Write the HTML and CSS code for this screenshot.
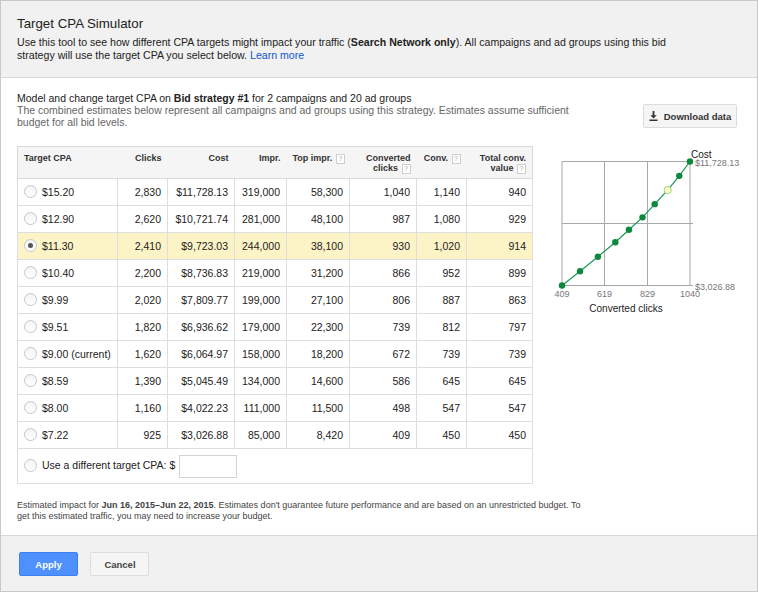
FILE: index.html
```html
<!DOCTYPE html>
<html lang="en">
<head>
  <meta charset="UTF-8">
  <title>Target CPA Simulator</title>
  <link rel="stylesheet" href="styles.css">
</head>
<body>

<div class="dialog">
  <div class="dialog-header">
    <h2>Target CPA Simulator</h2>
    <p>Use this tool to see how different CPA targets might impact your traffic (<b>Search Network only</b>). All campaigns and ad groups using this bid strategy will use the target CPA you select below. <a href="#">Learn more</a></p>
  </div>

  <div class="dialog-body">
    <div class="intro-row">
      <div class="intro">
        <p class="intro-main">Model and change target CPA on <b>Bid strategy #1</b> for 2 campaigns and 20 ad groups</p>
        <p class="intro-sub">The combined estimates below represent all campaigns and ad groups using this strategy. Estimates assume sufficient budget for all bid levels.</p>
      </div>
      <button class="btn btn-download">
        <svg width="9" height="10" viewBox="0 0 9 10"><path d="M3.6 0h1.8v4.2h2.3L4.5 7.4 1.3 4.2h2.3z M0.5 8.6h8v1.4h-8z" fill="#333"/></svg>
        <span>Download data</span>
      </button>
    </div>

    <div class="sim-row">
      <table class="sim-table">
        <thead>
          <tr>
            <th class="col-cpa">Target CPA</th>
            <th class="col-clicks">Clicks</th>
            <th class="col-cost">Cost</th>
            <th class="col-impr">Impr.</th>
            <th class="col-top">Top impr. <span class="help">?</span></th>
            <th class="col-conv-clicks">Converted<br>clicks <span class="help">?</span></th>
            <th class="col-conv">Conv. <span class="help">?</span></th>
            <th class="col-value">Total conv.<br>value <span class="help">?</span></th>
          </tr>
        </thead>
        <tbody>
          <tr><td><span class="radio"></span>$15.20</td><td>2,830</td><td>$11,728.13</td><td>319,000</td><td>58,300</td><td>1,040</td><td>1,140</td><td>940</td></tr>
          <tr><td><span class="radio"></span>$12.90</td><td>2,620</td><td>$10,721.74</td><td>281,000</td><td>48,100</td><td>987</td><td>1,080</td><td>929</td></tr>
          <tr class="selected"><td><span class="radio checked"></span>$11.30</td><td>2,410</td><td>$9,723.03</td><td>244,000</td><td>38,100</td><td>930</td><td>1,020</td><td>914</td></tr>
          <tr><td><span class="radio"></span>$10.40</td><td>2,200</td><td>$8,736.83</td><td>219,000</td><td>31,200</td><td>866</td><td>952</td><td>899</td></tr>
          <tr><td><span class="radio"></span>$9.99</td><td>2,020</td><td>$7,809.77</td><td>199,000</td><td>27,100</td><td>806</td><td>887</td><td>863</td></tr>
          <tr><td><span class="radio"></span>$9.51</td><td>1,820</td><td>$6,936.62</td><td>179,000</td><td>22,300</td><td>739</td><td>812</td><td>797</td></tr>
          <tr><td><span class="radio"></span>$9.00 (current)</td><td>1,620</td><td>$6,064.97</td><td>158,000</td><td>18,200</td><td>672</td><td>739</td><td>739</td></tr>
          <tr><td><span class="radio"></span>$8.59</td><td>1,390</td><td>$5,045.49</td><td>134,000</td><td>14,600</td><td>586</td><td>645</td><td>645</td></tr>
          <tr><td><span class="radio"></span>$8.00</td><td>1,160</td><td>$4,022.23</td><td>111,000</td><td>11,500</td><td>498</td><td>547</td><td>547</td></tr>
          <tr><td><span class="radio"></span>$7.22</td><td>925</td><td>$3,026.88</td><td>85,000</td><td>8,420</td><td>409</td><td>450</td><td>450</td></tr>
          <tr class="custom-row">
            <td colspan="8"><span class="radio"></span>Use a different target CPA: $ <input type="text" class="cpa-input"></td>
          </tr>
        </tbody>
      </table>

      <svg class="chart" width="205" height="172" viewBox="0 0 205 172">
        <g stroke="#a8a8a8" stroke-width="1" fill="none">
          <rect x="16" y="15.5" width="128" height="124"/>
          <line x1="58.5" y1="15.5" x2="58.5" y2="139.5"/>
          <line x1="101.5" y1="15.5" x2="101.5" y2="139.5"/>
          <line x1="16" y1="77.5" x2="147" y2="77.5"/>
          <line x1="144" y1="139.5" x2="147" y2="139.5"/>
        </g>
        <polyline fill="none" stroke="#1a9a52" stroke-width="1.2"
          points="16,139.5 34.05,125.32 51.9,110.73 69.35,96.2 82.94,83.78 96.53,71.34 108.7,58.13 121.69,44.07 133.25,29.84 144,15.5"/>
        <g fill="#0b8a3f">
          <circle cx="16" cy="139.5" r="3.2"/>
          <circle cx="34.05" cy="125.32" r="3.2"/>
          <circle cx="51.9" cy="110.73" r="3.2"/>
          <circle cx="69.35" cy="96.2" r="3.2"/>
          <circle cx="82.94" cy="83.78" r="3.2"/>
          <circle cx="96.53" cy="71.34" r="3.2"/>
          <circle cx="108.7" cy="58.13" r="3.2"/>
          <circle cx="133.25" cy="29.84" r="3.2"/>
          <circle cx="144" cy="15.5" r="3.2"/>
        </g>
        <circle cx="121.69" cy="44.07" r="3.6" fill="#fdfbc4" stroke="#9fcf8a" stroke-width="1"/>
        <text x="145" y="11.5" class="chart-title">Cost</text>
        <text x="149" y="20" class="chart-label">$11,728.13</text>
        <text x="149" y="144" class="chart-label">$3,026.88</text>
        <text x="16" y="151" class="chart-label" text-anchor="middle">409</text>
        <text x="58.5" y="151" class="chart-label" text-anchor="middle">619</text>
        <text x="101.5" y="151" class="chart-label" text-anchor="middle">829</text>
        <text x="144" y="151" class="chart-label" text-anchor="middle">1040</text>
        <text x="80" y="166" class="chart-title" text-anchor="middle">Converted clicks</text>
      </svg>
    </div>

    <p class="footnote">Estimated impact for <b>Jun 16, 2015&ndash;Jun 22, 2015</b>. Estimates don't guarantee future performance and are based on an unrestricted budget. To get this estimated traffic, you may need to increase your budget.</p>
  </div>

  <div class="dialog-footer">
    <button class="btn btn-primary">Apply</button>
    <button class="btn btn-cancel">Cancel</button>
  </div>
</div>

</body>
</html>
```

FILE: styles.css
```css
body { margin: 0; font-family: "Liberation Sans", Arial, sans-serif; color: #222; }
p { margin: 0; }

.dialog { width: 756px; height: 590px; border: 1px solid #c9c9c9; display: flex; flex-direction: column; }

.dialog-header { height: 77px; box-sizing: border-box; background: #f1f1f1; border-bottom: 1px solid #d9d9d9; padding: 15px 16px 0; }
.dialog-header h2 { margin: 0; font-size: 13.3px; line-height: 16px; font-weight: normal; color: #222; }
.dialog-header p { margin-top: 4px; max-width: 660px; font-size: 10.6px; line-height: 12.5px; }
.dialog-header a { color: #1155cc; text-decoration: none; }

.dialog-body { flex: 1; background: #fff; padding: 14px 20px 0 16px; }
.intro-row { display: flex; justify-content: space-between; align-items: flex-end; }
.intro { width: 570px; font-size: 10.5px; line-height: 12px; }
.intro-sub { color: #666; }

.btn { font-family: inherit; font-weight: bold; font-size: 9.5px; height: 24px; border-radius: 2px; border: 1px solid #dcdcdc; background: #f5f5f5; color: #333; cursor: pointer; padding: 0; white-space: nowrap; }
.btn-download { width: 94px; display: flex; align-items: center; justify-content: center; gap: 6px; }
.btn-primary { width: 59px; background: #4d90fe; border-color: #3b82f0; color: #fff; }
.btn-cancel { width: 59px; margin-left: 8px; color: #444; }

.sim-row { display: flex; align-items: flex-start; margin-top: 18px; }
.chart { margin-left: 13px; flex: none; }
.chart-title { font-family: "Liberation Sans", Arial, sans-serif; font-size: 10px; fill: #222; }
.chart-label { font-family: "Liberation Sans", Arial, sans-serif; font-size: 9px; fill: #777; }

.sim-table { width: 515px; border-collapse: collapse; border: 1px solid #d9d9d9; font-size: 10.5px; table-layout: fixed; }
.sim-table th { background: #f5f5f5; font-size: 9px; line-height: 10px; font-weight: bold; color: #333; text-align: right; vertical-align: top; padding: 6px 6px 0; height: 32px; box-sizing: border-box; border-bottom: 1px solid #dcdcdc; white-space: nowrap; }
.sim-table th.col-cpa { text-align: left; }
.col-cpa { width: 100px; }
.col-clicks { width: 50px; }
.col-cost { width: 67px; }
.col-impr { width: 52px; }
.col-top { width: 63px; }
.col-conv-clicks { width: 67px; }
.col-conv { width: 50px; }
.col-value { width: 66px; }

.sim-table td { height: 26px; padding: 0 6px; text-align: right; border: 1px solid #dedede; white-space: nowrap; }
.sim-table td:first-child { text-align: left; }
.sim-table tr.selected td { background: #fcf3c6; }
.sim-table tr.custom-row td { height: 34px; text-align: left; }

.help { display: inline-block; width: 7px; height: 8px; border: 1px solid #cfcfcf; color: #aaa; font-size: 7px; line-height: 8px; text-align: center; font-weight: normal; vertical-align: 0; background: #fff; margin-left: 1px; }

.radio { display: inline-block; width: 11px; height: 11px; border: 1px solid #c6c6c6; border-radius: 50%; vertical-align: middle; margin: -2px 5px 0 0; background: linear-gradient(#f4f4f4, #fff); position: relative; }
.radio.checked::after { content: ""; position: absolute; left: 3px; top: 3px; width: 5px; height: 5px; border-radius: 50%; background: #555; }

.cpa-input { width: 58px; height: 23px; box-sizing: border-box; border: 1px solid #d4d4d4; vertical-align: middle; margin-left: 1px; }

.footnote { margin-top: 16px; font-size: 9px; line-height: 11px; color: #444; width: 575px; }

.dialog-footer { height: 56px; box-sizing: border-box; border-top: 1px solid #d9d9d9; background: #f1f1f1; padding: 16px 18px 0; }
```
